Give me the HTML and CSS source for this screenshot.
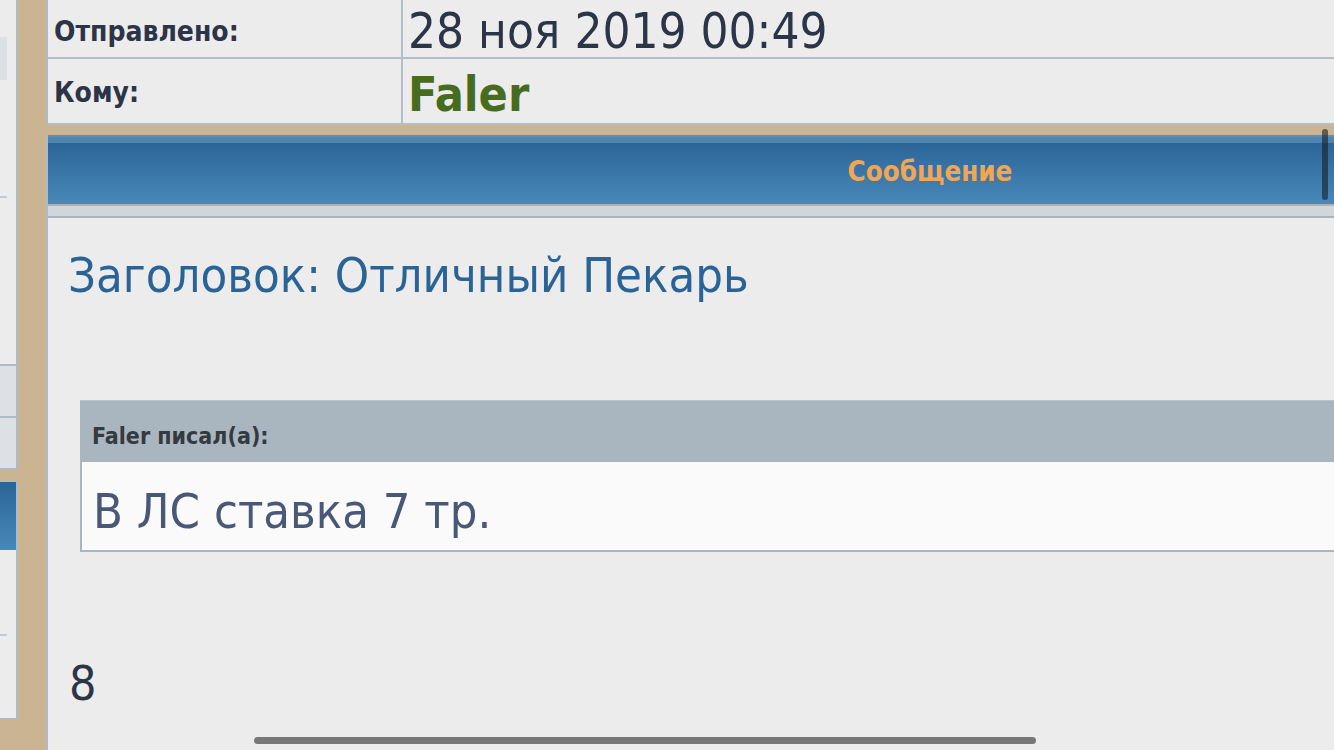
FILE: index.html
```html
<!DOCTYPE html>
<html lang="ru">
<head>
  <meta charset="UTF-8" />
  <title>Личное сообщение</title>
  <meta name="viewport" content="width=device-width, initial-scale=1.0" />
  <link rel="stylesheet" href="styles.css">
</head>
<body>

<div class="page">
  <aside class="side">
    <div class="side-panel side-top">
      <div class="side-box"></div>
      <div class="side-rule"></div>
      <div class="side-row"></div>
      <div class="side-row"></div>
    </div>
    <div class="side-panel side-bottom">
      <div class="side-head"></div>
      <div class="side-rule low"></div>
    </div>
  </aside>

  <main class="frame">
    <div class="info">
      <div class="info-row first">
        <div class="info-label">Отправлено:</div>
        <div class="info-value">28 ноя 2019 00:49</div>
      </div>
      <div class="info-row">
        <div class="info-label">Кому:</div>
        <div class="info-value user">Faler</div>
      </div>
    </div>

    <section class="msg">
      <div class="msg-head">Сообщение</div>
      <div class="msg-sub"></div>
      <div class="msg-body">
        <h2 class="subject">Заголовок: Отличный Пекарь</h2>
        <div class="quote">
          <div class="quote-head">Faler писал(а):</div>
          <div class="quote-text">В ЛС ставка 7 тр.</div>
        </div>
        <div class="sig">8</div>
      </div>
    </section>
  </main>
</div>

<div class="scroll-thumb"></div>
<div class="home-bar"></div>

</body>
</html>
```

FILE: styles.css
```css
html, body {
  margin: 0;
  padding: 0;
  height: 100%;
  overflow: hidden;
  background: #cbb491;
  font-family: "DejaVu Sans Condensed", "DejaVu Sans", sans-serif;
  font-stretch: condensed;
  color: #2c3547;
}

.page {
  display: flex;
  height: 750px;
  overflow: hidden;
}

/* левая колонка (обрезана) */
.side {
  flex: none;
  width: 18px;
  display: flex;
  flex-direction: column;
  gap: 12px;
}

.side-panel {
  background: #ececec;
  border-right: 2px solid #aebac4;
  border-bottom: 2px solid #aebac4;
}

.side-top {
  box-sizing: border-box;
  height: 470px;
  padding-top: 37px;
}

.side-box {
  width: 7px;
  height: 43px;
  background: #dde1e6;
}

.side-rule {
  width: 7px;
  height: 2px;
  background: #c3cad1;
  margin-top: 116px;
}

.side-rule.low {
  margin-top: 84px;
}

.side-row {
  height: 50px;
  background: #dde1e6;
  border-top: 2px solid #aebac4;
}

.side-top .side-row:nth-child(3) {
  margin-top: 166px;
}

.side-bottom {
  height: 238px;
  box-sizing: border-box;
}

.side-head {
  height: 68px;
  background: linear-gradient(#2c6597, #4789b9);
}

/* основная часть */
.frame {
  flex: none;
  width: 1766px;
  padding-left: 28px;
}

.info {
  border-left: 2px solid #aebac4;
  background: #ececec;
}

.info-row {
  display: grid;
  grid-template-columns: 355px 1fr;
  border-bottom: 2px solid #b3bec8;
  height: 64px;
}

.info-row.first {
  height: 57px;
}

.info-label {
  border-right: 2px solid #b3bec8;
  padding: 3px 0 0 6px;
  display: flex;
  align-items: center;
  font-weight: bold;
  font-size: 28px;
}

.info-value {
  padding: 3px 0 0 5px;
  display: flex;
  align-items: center;
  font-size: 49px;
}

.info-value.user {
  padding-top: 6px;
  font-weight: bold;
  font-size: 48px;
  color: #476b1f;
}

.msg {
  margin-top: 10px;
  border-left: 2px solid #aebac4;
  background: #ececec;
  height: 700px;
}

.msg-head {
  border-top: 2px solid #5b8fb8;
  height: 67px;
  line-height: 69px;
  background: linear-gradient(#4f86b0 0, #4f86b0 6px, #2c6597 6px, #4789b9 100%);
  border-bottom: 2px solid #a8b3bd;
  text-align: center;
  color: #f2a654;
  font-weight: bold;
  font-size: 27.5px;
}

.msg-sub {
  height: 10px;
  background: #d2d6db;
  border-bottom: 2px solid #aab4be;
}

.msg-body {
  padding: 31px 0 0 20px;
}

.subject {
  margin: 0;
  font-weight: normal;
  font-size: 48.6px;
  line-height: 52px;
  color: #2a6496;
}

.quote {
  margin: 99px 0 0 12px;
  border-left: 2px solid #aab6bf;
  border-bottom: 2px solid #aab6bf;
}

.quote-head {
  margin-left: -2px;
  background: #aab6bf;
  border-top: 1px solid #b9c3cb;
  height: 62px;
  box-sizing: border-box;
  padding: 10px 0 0 12px;
  line-height: 51px;
  font-weight: bold;
  font-size: 23px;
  color: #333a40;
}

.quote-text {
  background: #fafafa;
  height: 88px;
  box-sizing: border-box;
  padding: 10px 0 0 11px;
  line-height: 78px;
  font-size: 48.5px;
  color: #4a5877;
}

.sig {
  margin-top: 105px;
  font-size: 48px;
  line-height: 52px;
  padding-left: 1px;
}

/* оверлеи iOS */
.scroll-thumb {
  position: absolute;
  left: 1322px;
  top: 129px;
  width: 6px;
  height: 71px;
  border-radius: 3px;
  background: rgba(20, 30, 40, 0.6);
}

.home-bar {
  position: absolute;
  left: 254px;
  top: 737px;
  width: 782px;
  height: 7px;
  border-radius: 4px;
  background: #787878;
}
```
